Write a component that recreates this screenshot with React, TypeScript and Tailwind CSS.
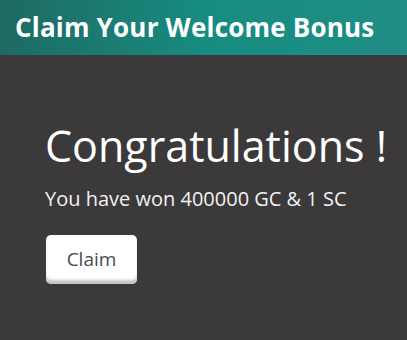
export default function App() {
  return (
    <div className="h-[340px] w-[407px] overflow-hidden bg-[#3b393a] font-['Open_Sans','Noto_Sans',sans-serif] text-white">
      <header className="flex h-[55px] items-center bg-gradient-to-r from-[#1d6a63] via-[#168c80] to-[#1f8e84] px-[15px]">
        <h1 className="whitespace-nowrap text-[26px] font-bold tracking-[0.2px]">Claim Your Welcome Bonus</h1>
      </header>
      <div className="px-[45px] pt-[65px]">
        <h2 className="whitespace-nowrap text-[43px] leading-[52px] font-normal">Congratulations !</h2>
        <p className="mt-[14px] whitespace-nowrap text-[20px] leading-[26px] text-[#f2f2f2]">You have won 400000 GC &amp; 1 SC</p>
        <button className="mt-[23px] ml-[1px] h-[49px] w-[91px] rounded-[5px] bg-white text-[19px] text-[#4a4a4a] shadow-[inset_0_-5px_3px_-1px_#c4c4c4]">
          Claim
        </button>
      </div>
    </div>
  );
}
